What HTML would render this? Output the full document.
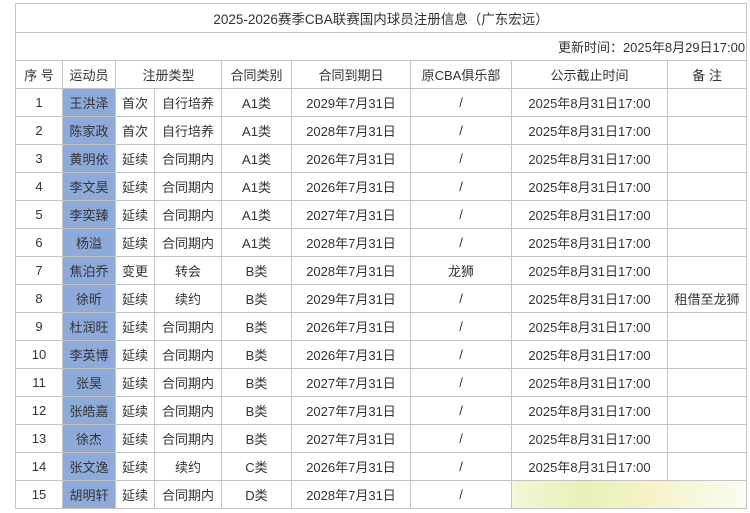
<!DOCTYPE html>
<html><head><meta charset="utf-8"><style>
body{margin:0;width:750px;height:513px;background:#fff;overflow:hidden;font-family:"Liberation Sans","Noto Sans CJK SC",sans-serif;color:#333;}
table{position:absolute;left:15px;top:3px;border-collapse:collapse;table-layout:fixed;width:731px;font-size:13px;}
td{border:1px solid #c4c4c4;text-align:center;padding:0;height:27px;white-space:nowrap;overflow:hidden;}
tr.t td{height:28px;font-size:13.5px;}
td.b{background:#8eaadb;}
td.r{text-align:right;padding-right:1px;}
.wm{background:linear-gradient(90deg,#f4f6d8 0%,#eaf0b8 30%,#f6f3c8 60%,#fbfbf2 100%);color:#7a8a40;text-align:left;font-size:10px;}
</style></head><body>
<table>
<colgroup><col style="width:47px"><col style="width:53px"><col style="width:39px"><col style="width:67px"><col style="width:70px"><col style="width:119px"><col style="width:101px"><col style="width:156px"><col style="width:79px"></colgroup>
<tr class="t"><td colspan="9">2025-2026赛季CBA联赛国内球员注册信息（广东宏远）</td></tr>
<tr><td colspan="9" class="r">更新时间：2025年8月29日17:00</td></tr>
<tr><td>序 号</td><td>运动员</td><td colspan="2">注册类型</td><td>合同类别</td><td>合同到期日</td><td>原CBA俱乐部</td><td>公示截止时间</td><td>备 注</td></tr>
<tr><td>1</td><td class="b">王洪泽</td><td>首次</td><td>自行培养</td><td>A1类</td><td>2029年7月31日</td><td>/</td><td>2025年8月31日17:00</td><td></td></tr>
<tr><td>2</td><td class="b">陈家政</td><td>首次</td><td>自行培养</td><td>A1类</td><td>2028年7月31日</td><td>/</td><td>2025年8月31日17:00</td><td></td></tr>
<tr><td>3</td><td class="b">黄明依</td><td>延续</td><td>合同期内</td><td>A1类</td><td>2026年7月31日</td><td>/</td><td>2025年8月31日17:00</td><td></td></tr>
<tr><td>4</td><td class="b">李文昊</td><td>延续</td><td>合同期内</td><td>A1类</td><td>2026年7月31日</td><td>/</td><td>2025年8月31日17:00</td><td></td></tr>
<tr><td>5</td><td class="b">李奕臻</td><td>延续</td><td>合同期内</td><td>A1类</td><td>2027年7月31日</td><td>/</td><td>2025年8月31日17:00</td><td></td></tr>
<tr><td>6</td><td class="b">杨溢</td><td>延续</td><td>合同期内</td><td>A1类</td><td>2028年7月31日</td><td>/</td><td>2025年8月31日17:00</td><td></td></tr>
<tr><td>7</td><td class="b">焦泊乔</td><td>变更</td><td>转会</td><td>B类</td><td>2028年7月31日</td><td>龙狮</td><td>2025年8月31日17:00</td><td></td></tr>
<tr><td>8</td><td class="b">徐昕</td><td>延续</td><td>续约</td><td>B类</td><td>2029年7月31日</td><td>/</td><td>2025年8月31日17:00</td><td>租借至龙狮</td></tr>
<tr><td>9</td><td class="b">杜润旺</td><td>延续</td><td>合同期内</td><td>B类</td><td>2026年7月31日</td><td>/</td><td>2025年8月31日17:00</td><td></td></tr>
<tr><td>10</td><td class="b">李英博</td><td>延续</td><td>合同期内</td><td>B类</td><td>2026年7月31日</td><td>/</td><td>2025年8月31日17:00</td><td></td></tr>
<tr><td>11</td><td class="b">张昊</td><td>延续</td><td>合同期内</td><td>B类</td><td>2027年7月31日</td><td>/</td><td>2025年8月31日17:00</td><td></td></tr>
<tr><td>12</td><td class="b">张皓嘉</td><td>延续</td><td>合同期内</td><td>B类</td><td>2027年7月31日</td><td>/</td><td>2025年8月31日17:00</td><td></td></tr>
<tr><td>13</td><td class="b">徐杰</td><td>延续</td><td>合同期内</td><td>B类</td><td>2027年7月31日</td><td>/</td><td>2025年8月31日17:00</td><td></td></tr>
<tr><td>14</td><td class="b">张文逸</td><td>延续</td><td>续约</td><td>C类</td><td>2026年7月31日</td><td>/</td><td>2025年8月31日17:00</td><td></td></tr>
<tr><td>15</td><td class="b">胡明轩</td><td>延续</td><td>合同期内</td><td>D类</td><td>2028年7月31日</td><td>/</td><td colspan="2" class="wm">&nbsp;&nbsp;&nbsp;</td></tr>
</table>
</body></html>
